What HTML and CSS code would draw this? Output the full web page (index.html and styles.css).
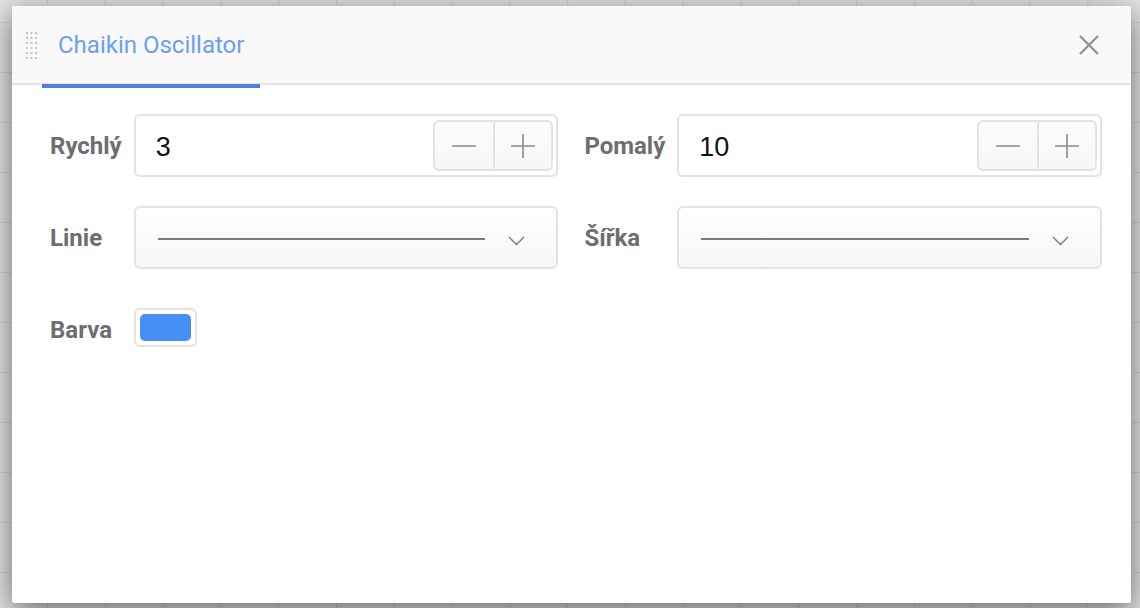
FILE: index.html
```html
<!DOCTYPE html>
<html lang="cs">
<head>
<meta charset="utf-8">
<title>Chaikin Oscillator</title>
<link rel="stylesheet" href="styles.css">
</head>
<body>
<div class="backdrop">
  <div class="dialog">
    <div class="header">
      <svg class="handle" width="11" height="27" viewBox="0 0 11 27">
        <g fill="#c2c2c2">
          <rect x="0" y="0" width="2" height="2"/><rect x="4.5" y="0" width="2" height="2"/><rect x="9" y="0" width="2" height="2"/>
          <rect x="0" y="5" width="2" height="2"/><rect x="4.5" y="5" width="2" height="2"/><rect x="9" y="5" width="2" height="2"/>
          <rect x="0" y="10" width="2" height="2"/><rect x="4.5" y="10" width="2" height="2"/><rect x="9" y="10" width="2" height="2"/>
          <rect x="0" y="15" width="2" height="2"/><rect x="4.5" y="15" width="2" height="2"/><rect x="9" y="15" width="2" height="2"/>
          <rect x="0" y="20" width="2" height="2"/><rect x="4.5" y="20" width="2" height="2"/><rect x="9" y="20" width="2" height="2"/>
          <rect x="0" y="25" width="2" height="2"/><rect x="4.5" y="25" width="2" height="2"/><rect x="9" y="25" width="2" height="2"/>
        </g>
      </svg>
      <div class="tab">Chaikin Oscillator</div>
      <div class="spacer"></div>
      <button class="close" aria-label="Zavřít">
        <svg width="20" height="20" viewBox="0 0 20 20"><path d="M1 1 L19 19 M19 1 L1 19" stroke="#8b9099" stroke-width="2.2" fill="none"/></svg>
      </button>
    </div>
    <div class="form">
      <div class="label">Rychlý</div>
      <div class="input">
        <span class="value">3</span>
        <div class="stepper">
          <button class="step"><svg width="26" height="26" viewBox="0 0 26 26"><path d="M1 13 H25" stroke="#8a8a8a" stroke-width="1.6"/></svg></button>
          <button class="step"><svg width="26" height="26" viewBox="0 0 26 26"><path d="M1 13 H25 M13 1 V25" stroke="#8a8a8a" stroke-width="1.6"/></svg></button>
        </div>
      </div>
      <div class="label second">Pomalý</div>
      <div class="input">
        <span class="value">10</span>
        <div class="stepper">
          <button class="step"><svg width="26" height="26" viewBox="0 0 26 26"><path d="M1 13 H25" stroke="#8a8a8a" stroke-width="1.6"/></svg></button>
          <button class="step"><svg width="26" height="26" viewBox="0 0 26 26"><path d="M1 13 H25 M13 1 V25" stroke="#8a8a8a" stroke-width="1.6"/></svg></button>
        </div>
      </div>

      <div class="label">Linie</div>
      <div class="select">
        <span class="line"></span>
        <svg class="chev" width="17" height="10" viewBox="0 0 17 10"><path d="M1 1 L8.5 8.5 L16 1" stroke="#7b7b7b" stroke-width="1.4" fill="none"/></svg>
      </div>
      <div class="label second">Šířka</div>
      <div class="select">
        <span class="line"></span>
        <svg class="chev" width="17" height="10" viewBox="0 0 17 10"><path d="M1 1 L8.5 8.5 L16 1" stroke="#7b7b7b" stroke-width="1.4" fill="none"/></svg>
      </div>

      <div class="label">Barva</div>
      <div class="swatch-cell">
        <div class="swatch"><span class="swatch-color"></span></div>
      </div>
    </div>
  </div>
</div>
</body>
</html>
```
FILE: styles.css
```css
* { box-sizing: border-box; }
html, body { margin: 0; padding: 0; }
body {
  width: 1140px;
  height: 608px;
  overflow: hidden;
  font-family: Roboto, "Liberation Sans", sans-serif;
}
.backdrop {
  position: relative;
  width: 1140px;
  height: 608px;
  background-color: #e3e3e3;
  background-image:
    linear-gradient(to right, #cfcfcf 1px, transparent 1px),
    linear-gradient(to bottom, #d3d3d3 1px, transparent 1px);
  background-size: 57.8px 100%, 100% 50px;
  background-position: 47px 0, 0 22px;
}
.dialog {
  position: absolute;
  left: 12px;
  top: 6px;
  width: 1119px;
  height: 597px;
  background: #fff;
  border-radius: 2px;
  box-shadow: 0 8px 30px rgba(0,0,0,0.55);
  display: flex;
  flex-direction: column;
}
.header {
  height: 79px;
  flex: none;
  background: #f9f9f9;
  border-bottom: 2px solid #e4e4e4;
  border-radius: 2px 2px 0 0;
  display: flex;
  align-items: center;
  padding-left: 14px;
  padding-right: 32px;
}
.handle { flex: none; margin-top: 1px; }
.tab {
  position: relative;
  align-self: stretch;
  display: flex;
  align-items: center;
  margin-left: 5px;
  padding: 0 16px;
  width: 218px;
  font-size: 24px;
  color: #6a9ff2;
  white-space: nowrap;
}
.tab::after {
  content: "";
  position: absolute;
  left: 0;
  right: 0;
  bottom: -5px;
  height: 4px;
  background: #4a82e1;
}
.spacer { flex: 1; }
.close {
  border: 0;
  background: none;
  padding: 0;
  width: 20px;
  height: 20px;
  display: flex;
}
.form {
  display: grid;
  grid-template-columns: auto 1fr auto 1fr;
  grid-template-rows: 63px 63px 63px;
  column-gap: 12px;
  row-gap: 29px;
  align-items: center;
  padding: 29px 29px 0 38px;
}
.label {
  font-size: 24px;
  font-weight: 700;
  color: #6d6d72;
  white-space: nowrap;
}
.label.second { margin-left: 14px; }
.input {
  height: 63px;
  border: 2px solid #e3e3e3;
  border-radius: 6px;
  background: #fff;
  display: flex;
  align-items: center;
  padding: 0 3px 0 20px;
}
.value {
  flex: 1;
  font-family: "Liberation Sans", Arial, sans-serif;
  font-size: 27px;
  color: #111;
  padding-top: 3px;
}
.stepper {
  display: flex;
  height: 51px;
  border: 2px solid #e3e3e3;
  border-radius: 6px;
  background: linear-gradient(#fdfdfd, #f6f6f6);
  overflow: hidden;
}
.step {
  width: 58px;
  border: 0;
  background: none;
  padding: 0;
  display: flex;
  align-items: center;
  justify-content: center;
}
.step + .step { border-left: 2px solid #e3e3e3; }
.select {
  height: 63px;
  border: 2px solid #e3e3e3;
  border-radius: 6px;
  background: linear-gradient(#ffffff, #f7f7f7);
  display: flex;
  align-items: center;
  gap: 23px;
  padding: 2px 31px 0 22px;
}
.line {
  flex: 1;
  height: 2px;
  background: #7a7a7a;
}
.chev { flex: none; margin-top: 5px; }
.swatch-cell { display: flex; align-items: center; }
.swatch {
  width: 63px;
  height: 39px;
  border: 2px solid #e3e3e3;
  border-radius: 6px;
  padding: 4px;
  background: #fff;
  display: flex;
  margin-top: -4px;
}
.swatch-color {
  flex: 1;
  border-radius: 5px;
  background: #458ff6;
}
```
